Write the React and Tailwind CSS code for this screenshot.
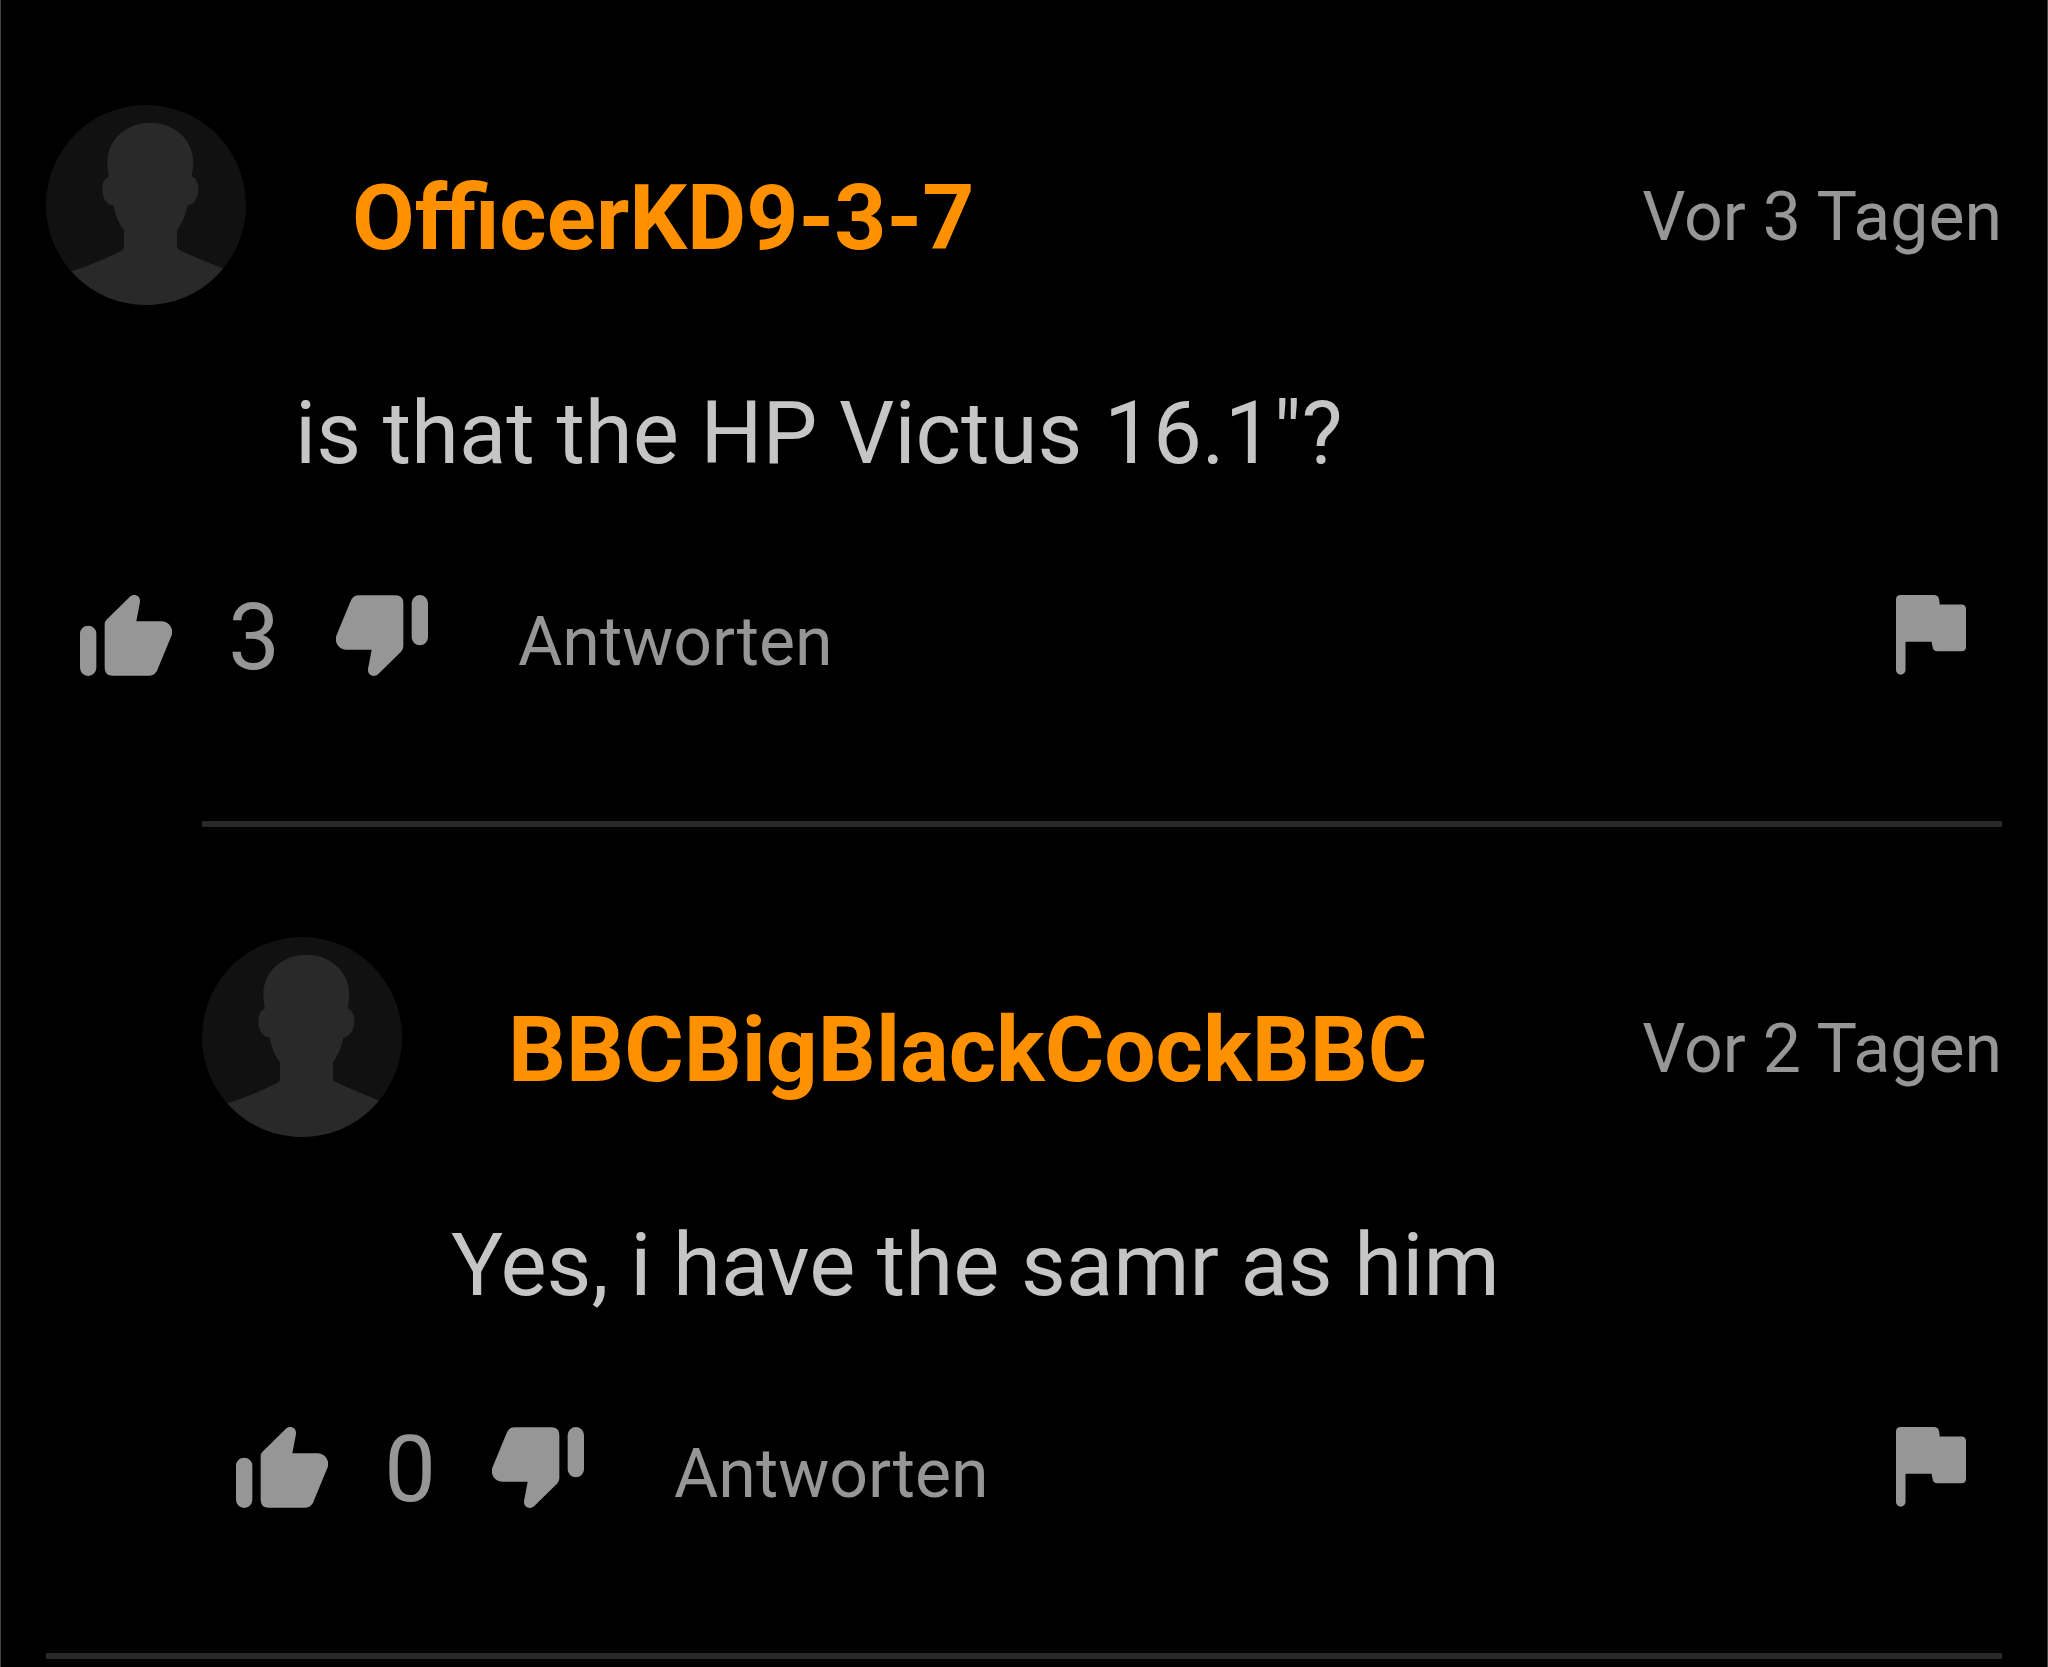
function Avatar() {
  return (
    <svg viewBox="0 0 600 600" className="size-[200px] shrink-0 rounded-full bg-[#111111]" aria-hidden="true">
      <path
        fill="#292929"
        d="M313 53C240 53 184 105 184 172C184 187 187 202 188 216C174 220 169 236 169 254C169 278 181 299 203 302C209 332 218 355 234 376V425Q234 434 225 438Q150 476 72 500V620H534V492Q460 462 401 436Q393 432 393 424V376C408 355 419 330 424 302C445 298 457 278 457 252C457 233 450 219 437 214C439 200 442 187 442 172C442 105 386 53 313 53Z"
      />
    </svg>
  );
}

function ThumbShapes() {
  return (
    <>
      <rect x="0" y="92" width="49" height="151" rx="24.5" />
      <path d="M74 89Q74 79 81 73L149 6C160 -5 182 0 180 21L169 79H245C266 79 282 100 275 121L232 225Q225 242 208 242H98Q74 242 74 218Z" />
    </>
  );
}

function ThumbUp() {
  return (
    <svg viewBox="0 0 276 243" className="h-[81px] w-[92px]" fill="currentColor" aria-hidden="true">
      <ThumbShapes />
    </svg>
  );
}

function ThumbDown() {
  return (
    <svg viewBox="0 0 276 243" className="h-[81px] w-[92px] rotate-180" fill="currentColor" aria-hidden="true">
      <ThumbShapes />
    </svg>
  );
}

function Flag() {
  return (
    <svg viewBox="0 0 213 243" className="h-20 w-[70px]" fill="currentColor" aria-hidden="true">
      <path d="M0 14Q0 0 14 0H116Q128 0 131 12L133 29H199Q213 29 213 43V157Q213 171 199 171H126Q115 171 112 161L108 142H29V228A14.5 14.5 0 0 1 0 228Z" />
    </svg>
  );
}

function Comment({ author, time, text, votes }) {
  return (
    <article>
      <header className="flex items-center">
        <Avatar />
        <a href="#" className="mt-6.5 ml-[106px] text-[91px] leading-[108px] font-bold text-[#ff9000]">{author}</a>
        <time className="mt-6 ml-auto text-[68px] leading-20 whitespace-nowrap">{time}</time>
      </header>
      <p className="mt-19 ml-[249px] text-[87px] leading-[104px] text-[#c6c5c6]">{text}</p>
      <div className="mt-[110px] flex h-[81px] items-center pr-9 pl-[34px]">
        <button type="button" aria-label="Gefällt mir"><ThumbUp /></button>
        <span className="mt-1 w-[164px] text-center text-[92px] leading-[108px]">{votes}</span>
        <button type="button" aria-label="Gefällt mir nicht"><ThumbDown /></button>
        <button type="button" className="mt-3 ml-[90px] text-[68px] leading-20">Antworten</button>
        <button type="button" aria-label="Melden" className="ml-auto self-start"><Flag /></button>
      </div>
    </article>
  );
}

export default function App() {
  return (
    <main className="min-h-screen border-x border-[#444444] bg-black px-[45px] pt-[105px] pb-2 font-['Roboto',sans-serif] text-[#969696]">
      <section className="border-b-6 border-[#292929] pb-[145px]">
        <Comment author="OfficerKD9-3-7" time="Vor 3 Tagen" text={'is that the HP Victus 16.1"?'} votes="3" />
        <div className="mt-[145px] ml-39 border-t-6 border-[#292929] pt-[110px]">
          <Comment author="BBCBigBlackCockBBC" time="Vor 2 Tagen" text="Yes, i have the samr as him" votes="0" />
        </div>
      </section>
    </main>
  );
}
